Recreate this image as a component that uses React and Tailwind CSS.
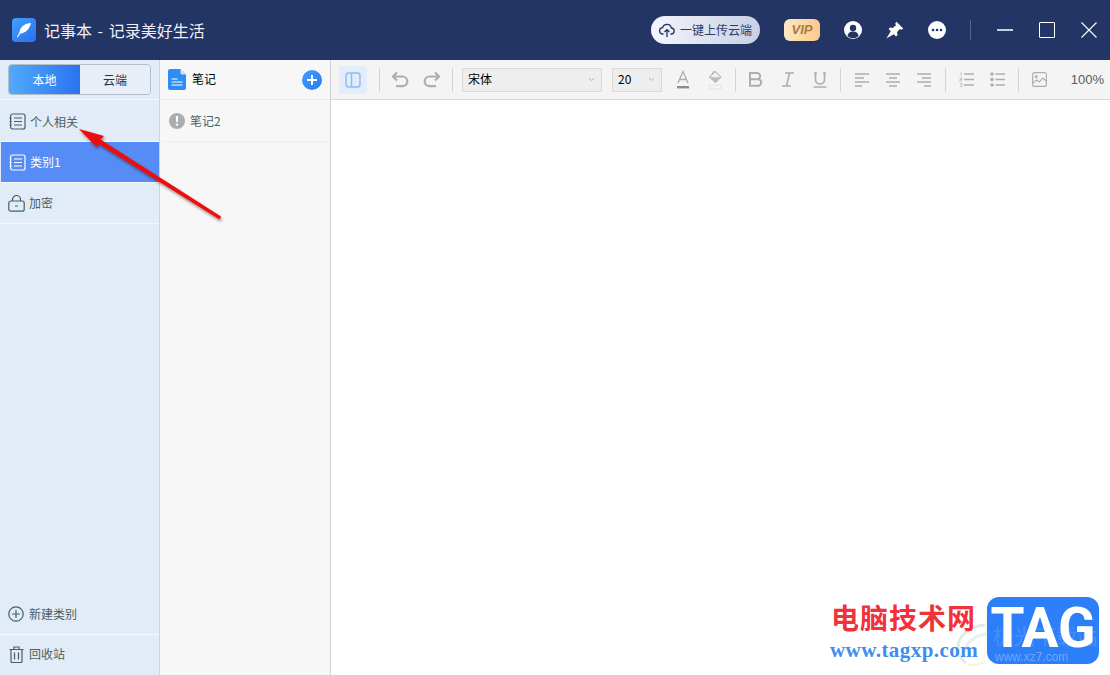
import React from "react";

const font = { fontFamily: '"Noto Sans CJK SC", "Liberation Sans", sans-serif' };

function ListIcon({ color = "#46605f" }) {
  return (
    <svg width="17" height="17" viewBox="0 0 17 17" fill="none" stroke={color} strokeWidth="1.2">
      <rect x="1.6" y="1" width="14.4" height="15" rx="2" />
      <path d="M5 5h8M5 8.5h8M5 12h8" />
      <path d="M0.5 5h2M0.5 8.5h2M0.5 12h2" />
    </svg>
  );
}

function Sep() {
  return <div className="w-px h-[24px] bg-[#d4d4d4] shrink-0" />;
}

function Tool({ children }) {
  return <div className="w-8 h-6 flex items-center justify-center shrink-0">{children}</div>;
}

const G = "#a9afb6";

function Align({ kind }) {
  const rows = {
    left: ["M1 2h14", "M1 6h9", "M1 10h14", "M1 14h7"],
    center: ["M1 2h14", "M4 6h8", "M1 10h14", "M4 14h8"],
    right: ["M1 2h14", "M6 6h9", "M1 10h14", "M8 14h7"],
  }[kind];
  return (
    <svg width="16" height="16" viewBox="0 0 16 16" stroke={G} strokeWidth="1.5" fill="none">
      {rows.map((d) => (
        <path key={d} d={d} />
      ))}
    </svg>
  );
}

function Chevron() {
  return (
    <svg width="7" height="5" viewBox="0 0 7 5" fill="none" stroke="#b5b5b5" strokeWidth="1">
      <path d="M1 1l2.5 2.5L6 1" />
    </svg>
  );
}

function Toolbar() {
  return (
    <div className="h-10 bg-[#f4f4f4] border-b border-[#d6d6d6] flex items-center pl-2 pr-[6px] text-[#333]">
      <div className="w-7 h-7 rounded bg-[#e1edfb] flex items-center justify-center shrink-0">
        <svg width="16" height="16" viewBox="0 0 16 16" fill="none" stroke="#8dbdf6" strokeWidth="1.5">
          <rect x="1" y="1" width="14" height="14" rx="2.5" />
          <path d="M6.5 1v14" />
        </svg>
      </div>
      <div className="ml-3"><Sep /></div>
      <div className="ml-1 flex">
        <Tool>
          <svg width="18" height="17" viewBox="0 0 18 17" fill="none" stroke={G} strokeWidth="2.2">
            <path d="M6 1.5L2 5.5l4 4" />
            <path d="M2.5 5.5h9a4.8 4.8 0 0 1 0 9.6H5" />
          </svg>
        </Tool>
        <Tool>
          <svg width="18" height="17" viewBox="0 0 18 17" fill="none" stroke={G} strokeWidth="2.2">
            <path d="M12 1.5l4 4-4 4" />
            <path d="M15.5 5.5h-9a4.8 4.8 0 0 0 0 9.6H13" />
          </svg>
        </Tool>
      </div>
      <div className="ml-1"><Sep /></div>
      <div className="ml-[9px] w-[140px] h-6 bg-[#eeeeee] border border-[#d9d9d9] flex items-center justify-between pl-[5px] pr-[6px] text-xs text-black shrink-0">
        <span className="pb-[2px]">宋体</span>
        <Chevron />
      </div>
      <div className="ml-[10px] w-[50px] h-6 bg-[#eeeeee] border border-[#d9d9d9] flex items-center justify-between pl-[5px] pr-[6px] text-xs text-black shrink-0">
        <span className="pb-[2px]">20</span>
        <Chevron />
      </div>
      <div className="ml-[5px] flex">
        <Tool>
          <svg width="14" height="20" viewBox="0 0 14 20" fill="none">
            <path d="M2 13L7 1.5 12 13M3.6 9.5h6.8" stroke={G} strokeWidth="1.3" />
            <rect x="1" y="16" width="12" height="2.4" fill="#8d8d8d" />
          </svg>
        </Tool>
        <Tool>
          <svg width="14" height="20" viewBox="0 0 14 20" fill="none">
            <path d="M7 1.5L13 7 7.5 12.5 1.5 7z" stroke="#b8bcc2" strokeWidth="1.1" />
            <path d="M1.5 7.2h11.2L7.5 12.5z" fill="#b8bcc2" />
            <path d="M4.2 4L6.4 1" stroke={G} strokeWidth="1.2" />
            <rect x="1" y="15" width="12" height="4" stroke="#e3e3e3" />
          </svg>
        </Tool>
      </div>
      <div className="ml-1"><Sep /></div>
      <div className="ml-1 flex">
        <Tool>
          <svg width="16" height="15" viewBox="0 0 16 15" fill="none" stroke={G} strokeWidth="2">
            <path d="M2 1h7a3 3 0 0 1 0 6.3H2zM2 7.3h8a3.2 3.2 0 0 1 0 6.4H2z" />
          </svg>
        </Tool>
        <Tool>
          <svg width="14" height="15" viewBox="0 0 14 15" fill="none" stroke={G} strokeWidth="1.6">
            <path d="M4 1h9M1 14h9M8.5 1L5.5 14" />
          </svg>
        </Tool>
        <Tool>
          <svg width="14" height="16" viewBox="0 0 14 16" fill="none" stroke={G} strokeWidth="1.7">
            <path d="M1 1h3M10 1h3M2.5 1v6.5a4.5 4.5 0 0 0 9 0V1M0.5 15h13" />
          </svg>
        </Tool>
      </div>
      <div className="ml-1"><Sep /></div>
      <div className="ml-[5px] flex">
        <Tool><Align kind="left" /></Tool>
        <div className="-ml-px"><Tool><Align kind="center" /></Tool></div>
        <div className="-ml-px"><Tool><Align kind="right" /></Tool></div>
      </div>
      <div className="ml-[5px]"><Sep /></div>
      <div className="ml-1 flex">
        <Tool>
          <svg width="15" height="15" viewBox="0 0 15 15" stroke={G} fill="none">
            <path d="M5 2h10M5 7.5h10M5 13h10" strokeWidth="1.5" />
            <path d="M1 1h1.4v3M0.8 6.2h2v1.4h-2v1.5h2M0.8 11.5h2v3h-2" strokeWidth="0.7" />
          </svg>
        </Tool>
        <div className="-ml-px">
          <Tool>
            <svg width="15" height="15" viewBox="0 0 15 15" fill={G}>
              <circle cx="2" cy="2" r="1.8" />
              <circle cx="2" cy="7.5" r="1.8" />
              <circle cx="2" cy="13" r="1.8" />
              <path d="M5.5 1.2h9.5v1.5H5.5zM5.5 6.7h9.5v1.5H5.5zM5.5 12.2h9.5v1.5H5.5z" />
            </svg>
          </Tool>
        </div>
      </div>
      <div className="ml-[5px]"><Sep /></div>
      <div className="ml-1">
        <Tool>
          <svg width="15" height="15" viewBox="0 0 15 15" fill="none" stroke={G} strokeWidth="1.1">
            <rect x="0.6" y="0.6" width="13.8" height="13.8" rx="2" />
            <circle cx="4.2" cy="4.6" r="1.1" />
            <path d="M0.8 11l4-3 2.5 2 3.5-4 3.4 3" />
          </svg>
        </Tool>
      </div>
      <span className="ml-auto text-[13px] text-[#4a6262]" style={{ fontFamily: '"Liberation Sans", sans-serif' }}>100%</span>
    </div>
  );
}

function Sidebar() {
  return (
    <aside className="w-[160px] shrink-0 bg-[#e1ecf8] border-r border-[#d0d4d8] flex flex-col text-xs text-[#4b6161]">
      <div className="h-[40px] pt-[4px] pl-2 border-b border-[#f4f7fb]">
        <div className="w-[143px] h-[31px] rounded-[4px] border border-[#b4bdc6] flex overflow-hidden">
          <div className="w-[71px] bg-gradient-to-r from-[#52aafc] to-[#2b73ee] text-white flex items-center justify-center">本地</div>
          <div className="flex-1 bg-[#e7eef7] text-[#333] flex items-center justify-center">云端</div>
        </div>
      </div>
      <div className="h-[42px] flex items-center pl-[9px] pt-[2px] gap-[4px] border-b border-[#f4f7fb]">
        <ListIcon />
        <span>个人相关</span>
      </div>
      <div className="h-[41px] ml-px flex items-center pl-2 gap-[4px] bg-[#568cf5] text-white border-b border-[#f4f7fb]">
        <ListIcon color="#ffffff" />
        <span>类别1</span>
      </div>
      <div className="h-[41px] flex items-center pl-2 gap-[4px] border-b border-[#f4f7fb]">
        <svg width="17" height="17" viewBox="0 0 17 17" fill="none" stroke="#46605f" strokeWidth="1.2">
          <rect x="0.8" y="6" width="15.4" height="10.2" rx="2" />
          <path d="M4.5 6V4.5a4 4 0 0 1 8 0V6M7 11h3" />
        </svg>
        <span>加密</span>
      </div>
      <div className="flex-1" />
      <div className="h-[41px] flex items-center pl-2 gap-[5px] border-b border-[#f4f7fb]">
        <svg width="16" height="16" viewBox="0 0 16 16" fill="none" stroke="#46605f" strokeWidth="1.2">
          <circle cx="8" cy="8" r="7.2" />
          <path d="M4 8h8M8 4v8" />
        </svg>
        <span>新建类别</span>
      </div>
      <div className="h-[40px] flex items-center pl-[9px] pb-[2px] gap-[5px]">
        <svg width="15" height="17" viewBox="0 0 15 17" fill="none" stroke="#46605f" strokeWidth="1.2">
          <path d="M0.5 3.5h14M5 3V1h5v2M2 4v11.5a1 1 0 0 0 1 1h9a1 1 0 0 0 1-1V4M5.5 6.5v7M9.5 6.5v7" />
        </svg>
        <span>回收站</span>
      </div>
    </aside>
  );
}

function Notes() {
  return (
    <section className="w-[171px] shrink-0 bg-[#f7f7f7] border-r border-[#d0d0d0] flex flex-col text-xs">
      <div className="h-[40px] border-b border-[#e4ecf4] flex items-center pl-2 pr-2">
        <svg width="18" height="21" viewBox="0 0 18 21">
          <path d="M2 0h10.5L18 5.5V19a2 2 0 0 1-2 2H2a2 2 0 0 1-2-2V2a2 2 0 0 1 2-2z" fill="#2f8bf5" />
          <path d="M12.5 0L18 5.5h-4a1.5 1.5 0 0 1-1.5-1.5z" fill="#cfe4fc" />
          <path d="M3.5 10h6M3.5 13h11M3.5 16h11" stroke="#fff" strokeWidth="1.2" />
        </svg>
        <span className="ml-[6px] pb-[2px] text-black">笔记</span>
        <div className="ml-auto w-5 h-5 rounded-full bg-gradient-to-br from-[#43a0fb] to-[#2a78ee] flex items-center justify-center">
          <svg width="12" height="12" viewBox="0 0 12 12" stroke="#fff" strokeWidth="2">
            <path d="M1 6h10M6 1v10" />
          </svg>
        </div>
      </div>
      <div className="h-[42px] ml-px mr-px border-b border-[#e8eff7] flex items-center pl-2 text-[#4b6161]">
        <div className="w-4 h-4 rounded-full bg-[#aaadb2] text-white flex items-center justify-center">
          <svg width="4" height="10" viewBox="0 0 4 10" fill="#fff">
            <path d="M0.8 0h2.4L2.8 6.2H1.2z" />
            <circle cx="2" cy="8.6" r="1.2" />
          </svg>
        </div>
        <span className="ml-[5px]">笔记2</span>
      </div>
    </section>
  );
}

function Header() {
  return (
    <header className="h-[60px] bg-[#233565] flex items-center text-white shrink-0">
      <div className="ml-3 w-6 h-6 rounded-[4px] bg-gradient-to-br from-[#45a0fb] to-[#2a6ff0] flex items-center justify-center">
        <svg width="16" height="16" viewBox="0 0 16 16" fill="#fff">
          <path d="M15 1C9 1.5 4.5 4.5 3.5 10L1 15l.8.4L4.3 11.5C9.5 11 13.5 7.5 15 1z" />
        </svg>
      </div>
      <span className="ml-2 text-base text-[#eef1f6] [word-spacing:2px]">记事本 - 记录美好生活</span>
      <div className="ml-auto flex items-center">
        <div className="w-[109px] h-7 rounded-full bg-gradient-to-r from-[#f4f6fc] to-[#c9d0e6] flex items-center pl-2 text-[#2c3d6b] text-xs">
          <svg width="16" height="15" viewBox="0 0 16 15" fill="none" stroke="#233565" strokeWidth="1.3" className="shrink-0">
            <path d="M4.5 11H4a3.2 3.2 0 0 1-.4-6.4A4.5 4.5 0 0 1 12.3 5 3 3 0 0 1 12 11h-.5" />
            <path d="M8 14V7M5.5 9L8 6.6 10.5 9" />
          </svg>
          <span className="ml-[5px] whitespace-nowrap">一键上传云端</span>
        </div>
        <div className="ml-6 w-9 h-[22px] rounded-md bg-gradient-to-r from-[#fde8c4] to-[#fbc98a] flex items-center justify-center text-[#a97a3f] text-[13px] font-bold italic" style={{ fontFamily: '"Liberation Sans", sans-serif' }}>
          VIP
        </div>
        <svg className="ml-[24px]" width="18" height="18" viewBox="0 0 18 18">
          <circle cx="9" cy="9" r="9" fill="#fff" />
          <circle cx="9" cy="7" r="3.2" fill="#233565" />
          <path d="M3.4 15c.6-3.4 2.8-4.6 5.6-4.6s5 1.2 5.6 4.6A8 8 0 0 1 3.4 15z" fill="#233565" />
        </svg>
        <svg className="ml-[24px]" width="18" height="18" viewBox="0 0 18 18" fill="#fff">
          <path d="M10.5 0.8L17.2 7.5 15.4 8.8 13.8 8 11 11.2 11.6 14 10 15.4 2.6 8 4 6.4 6.8 7 10 4.2 9.2 2.6z" />
          <path d="M5 9.8L8.2 13 0.4 17.6z" />
        </svg>
        <svg className="ml-[24px]" width="18" height="18" viewBox="0 0 18 18">
          <circle cx="9" cy="9" r="9" fill="#fff" />
          <circle cx="5" cy="9" r="1.3" fill="#233565" />
          <circle cx="9" cy="9" r="1.3" fill="#233565" />
          <circle cx="13" cy="9" r="1.3" fill="#233565" />
        </svg>
        <div className="ml-[24px] w-px h-5 bg-[#56648c]" />
        <svg className="ml-[26px]" width="16" height="2" viewBox="0 0 16 2">
          <rect width="16" height="2" fill="#c8cedd" />
        </svg>
        <div className="ml-[26px] w-4 h-4 border border-white rounded-[1px]" />
        <svg className="ml-[26px] mr-[13px]" width="16" height="16" viewBox="0 0 16 16" stroke="#fff" strokeWidth="1.1" fill="none">
          <path d="M0.5 0.5l15 15M15.5 0.5l-15 15" />
        </svg>
      </div>
    </header>
  );
}

export default function App() {
  return (
    <div className="relative w-[1110px] h-[675px] overflow-hidden bg-white flex flex-col" style={font}>
      <Header />
      <div className="flex-1 flex min-h-0">
        <Sidebar />
        <Notes />
        <main className="flex-1 flex flex-col min-w-0">
          <Toolbar />
          <div className="flex-1 bg-white" />
        </main>
      </div>

      {/* red annotation arrow */}
      <svg className="absolute left-0 top-0 pointer-events-none" width="260" height="240" viewBox="0 0 260 240">
        <defs>
          <filter id="s" x="-20%" y="-20%" width="140%" height="140%">
            <feDropShadow dx="1" dy="2" stdDeviation="1.5" floodColor="#000" floodOpacity="0.45" />
          </filter>
        </defs>
        <path d="M79 129L104 136L100.5 139.5L221 216.5L219.5 219.5L98 143.5L97 147.5z" fill="#ee0a0a" filter="url(#s)" />
      </svg>

      {/* watermark */}
      <svg className="absolute left-[955px] top-[622px]" width="34" height="46" viewBox="0 0 34 46" fill="none" opacity="0.35">
        <path d="M30 3C14 4 3 14 3 26c0 6 3 11 8 15" stroke="#9ccdb8" strokeWidth="3" />
        <path d="M32 12C20 13 11 20 11 29" stroke="#b7d7ea" strokeWidth="3" />
        <path d="M12 42c6 2 12 1 18-2" stroke="#e8e08c" strokeWidth="2" />
      </svg>
      <div className="absolute left-[831px] top-[600px] text-[28px] leading-[34px] font-bold text-[#f2313a] tracking-[1px] whitespace-nowrap">电脑技术网</div>
      <div className="absolute left-[830px] top-[637px] text-[21px] leading-[26px] font-bold text-[#3f8cf0] tracking-[0.45px] whitespace-nowrap" style={{ fontFamily: '"Liberation Serif", serif' }}>www.tagxp.com</div>
      <div className="absolute left-[987px] top-[597px] w-[112px] h-[67px] rounded-[12px] bg-[#2d7ff9] overflow-hidden">
        <div className="absolute left-0 right-0 top-[2px] h-[58px] flex items-center justify-center text-white text-[55px] leading-none font-bold" style={{ fontFamily: 'Roboto, "Liberation Sans", sans-serif' }}>TAG</div>
        <div className="absolute left-[6px] top-[28px] text-[21px] leading-none text-white opacity-[0.12] whitespace-nowrap">极光下载站</div>
        <div className="absolute left-[8px] top-[54px] text-[12px] leading-none text-white opacity-[0.3] whitespace-nowrap" style={{ fontFamily: '"Liberation Sans", sans-serif' }}>www.xz7.com</div>
      </div>
    </div>
  );
}
